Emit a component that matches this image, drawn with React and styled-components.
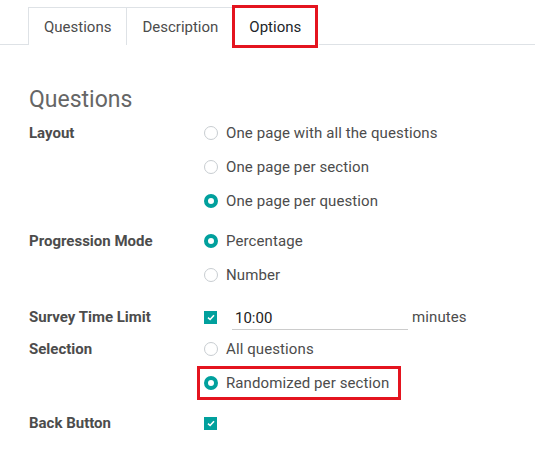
import React from "react";
import styled, { createGlobalStyle } from "styled-components";

const GlobalStyle = createGlobalStyle`
  body {
    margin: 0;
    background: #fff;
    font-family: Roboto, "Liberation Sans", sans-serif;
    color: #4c4c4c;
  }
`;

const Page = styled.div`
  width: 535px;
  height: 469px;
  overflow: hidden;
  padding-top: 7px;
  box-sizing: border-box;
`;

const TabBar = styled.div`
  display: flex;
  padding-left: 28px;
  border-bottom: 1px solid #dee2e6;
`;

const Tab = styled.div`
  position: relative;
  height: 37px;
  padding: 0 15px;
  display: flex;
  align-items: center;
  font-size: 15px;
  color: ${(p) => (p.$active ? "#212529" : "#4c4c4c")};
  border: 1px solid #dee2e6;
  border-bottom: none;
  margin-bottom: -1px;
  background: #fff;
  & + & {
    border-left: none;
  }
  ${(p) =>
    p.$active &&
    `
    border-color: transparent;
    padding: 0 17px 0 15px;
    &::after {
      content: "";
      position: absolute;
      inset: -3px 0 -3px -2px;
      border: 3px solid #e4141f;
    }
  `}
`;

const Sheet = styled.div`
  padding: 40px 0 0 29px;
`;

const Heading = styled.h2`
  margin: 0;
  font-size: 23px;
  line-height: 30px;
  font-weight: 400;
  color: #666;
`;

const Row = styled.div`
  display: grid;
  grid-template-columns: 175px 1fr;
  margin-top: ${(p) => p.$mt || 0}px;
`;

const Label = styled.div`
  font-size: 15px;
  font-weight: 700;
  line-height: ${(p) => p.$h || 34}px;
  color: #4c4c4c;
`;

const Options = styled.div`
  display: flex;
  flex-direction: column;
  align-items: flex-start;
`;

const Option = styled.div`
  position: relative;
  display: inline-flex;
  align-items: center;
  gap: 8px;
  height: 34px;
  font-size: 15px;
  letter-spacing: 0.1px;
  color: #4c4c4c;
  ${(p) =>
    p.$highlight &&
    `
    &::after {
      content: "";
      position: absolute;
      inset: 0 -12px 0 -7px;
      border: 3px solid #e4141f;
    }
  `}
`;

const Radio = styled.span`
  width: 14px;
  height: 14px;
  box-sizing: border-box;
  border-radius: 50%;
  flex: none;
  border: ${(p) => (p.$checked ? "4px solid #01a09d" : "1px solid #c8cdd1")};
  background: #fff;
`;

const Check = styled.span`
  width: 13px;
  height: 13px;
  flex: none;
  background: #01a09d;
  display: flex;
  align-items: center;
  justify-content: center;
`;

const TimeRow = styled.div`
  display: flex;
  align-items: center;
  height: ${(p) => p.$h}px;
`;

const TimeInput = styled.div`
  margin-left: 15px;
  width: 173px;
  padding-left: 3px;
  height: 24px;
  line-height: 26px;
  border-bottom: 1px solid #ccc;
  font-size: 15px;
  color: #222;
`;

const Unit = styled.span`
  margin-left: 4px;
  font-size: 15px;
  letter-spacing: 0.1px;
  color: #4c4c4c;
`;

const CheckBox = () => (
  <Check>
    <svg width="8" height="7" viewBox="0 0 8 7">
      <path d="M1 3.6 L3.1 5.5 L7 1.3" fill="none" stroke="#fff" strokeWidth="1.6" />
    </svg>
  </Check>
);

const RadioGroup = ({ items, checked, highlight }) => (
  <Options>
    {items.map((item) => (
      <Option key={item} $highlight={item === highlight}>
        <Radio $checked={item === checked} />
        {item}
      </Option>
    ))}
  </Options>
);

export default function App() {
  return (
    <Page>
      <GlobalStyle />
      <TabBar>
        <Tab>Questions</Tab>
        <Tab>Description</Tab>
        <Tab $active>Options</Tab>
      </TabBar>
      <Sheet>
        <Heading>Questions</Heading>
        <Row $mt={1}>
          <Label>Layout</Label>
          <RadioGroup
            items={[
              "One page with all the questions",
              "One page per section",
              "One page per question",
            ]}
            checked="One page per question"
          />
        </Row>
        <Row $mt={6}>
          <Label>Progression Mode</Label>
          <RadioGroup items={["Percentage", "Number"]} checked="Percentage" />
        </Row>
        <Row $mt={10}>
          <Label $h={30}>Survey Time Limit</Label>
          <TimeRow $h={30}>
            <CheckBox />
            <TimeInput>10:00</TimeInput>
            <Unit>minutes</Unit>
          </TimeRow>
        </Row>
        <Row>
          <Label>Selection</Label>
          <RadioGroup
            items={["All questions", "Randomized per section"]}
            checked="Randomized per section"
            highlight="Randomized per section"
          />
        </Row>
        <Row $mt={6}>
          <Label>Back Button</Label>
          <TimeRow $h={34}>
            <CheckBox />
          </TimeRow>
        </Row>
      </Sheet>
    </Page>
  );
}
